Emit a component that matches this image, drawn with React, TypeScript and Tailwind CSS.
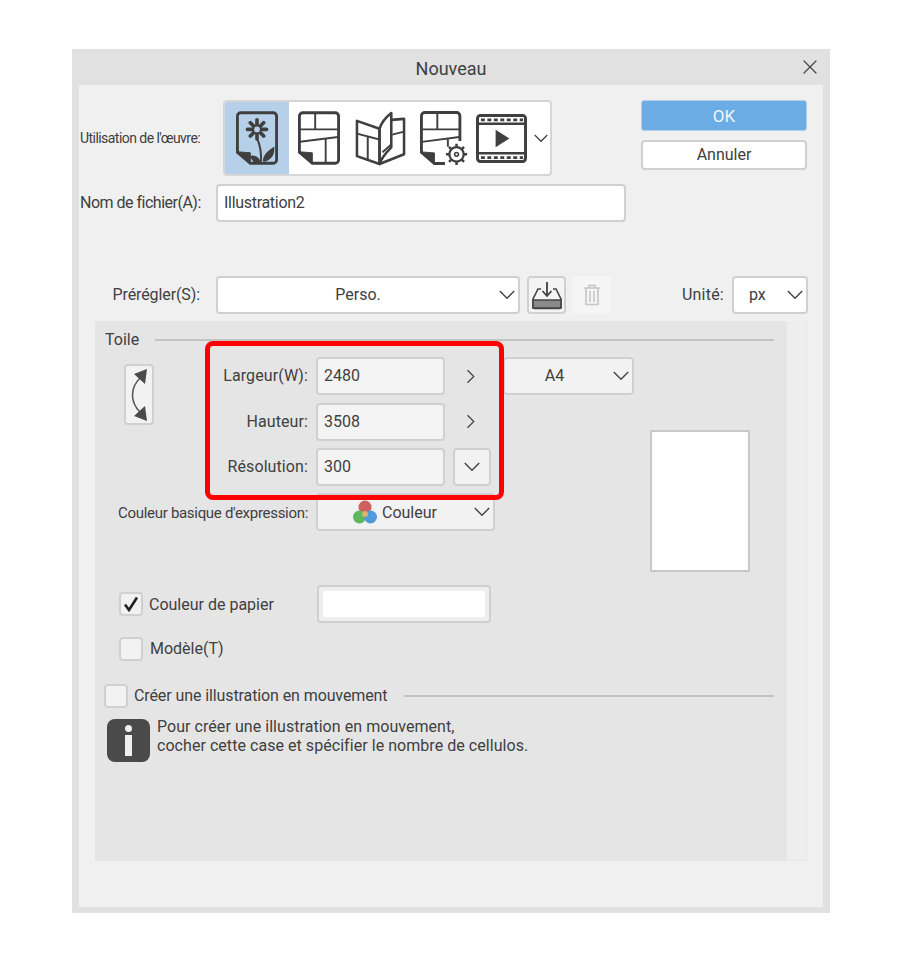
import { X } from 'lucide-react';

const fieldBorder = 'border-2 border-[#d0d0d0] rounded-[4px]';

function Chevron({ w, dir = 'down', className }: { w: number; dir?: 'down' | 'right'; className?: string }) {
  return (
    <svg width={w} height={w / 2 + 2} viewBox="0 0 20 12" fill="none" stroke="#444" strokeWidth="1.800" className={`${dir === 'right' ? 'rotate-[-90deg]' : ''} ${className ?? ''}`}>
      <path d="M1 1L10 10L19 1" />
    </svg>
  );
}

function PageFrame({ children }: { children?: React.ReactNode }) {
  return (
    <svg width="42" height="56" viewBox="0 0 44 56" fill="none" stroke="#3f3f3f" strokeWidth="3">
      <path d="M5 1.500H39a3.500 3.500 0 0 1 3.500 3.500V51a3.500 3.500 0 0 1-3.500 3.500H15L1.500 43V5A3.500 3.500 0 0 1 5 1.500Z" />
      <path d="M2 42.500L15 43.500V54Z" fill="#3f3f3f" strokeWidth="1" />
      {children}
    </svg>
  );
}

function FlowerIcon() {
  return (
    <PageFrame>
      <g stroke="#3f3f3f" strokeWidth="3.800" strokeLinecap="round">
        <path d="M22 9V29M12 19H32M15 12L29 26M29 12L15 26" />
      </g>
      <circle cx="22" cy="19" r="3.800" fill="#b5d0e8" stroke="#3f3f3f" strokeWidth="1.500" />
      <path d="M22 28C25 35 27 43 26 53" strokeWidth="2" />
      <path d="M14 47C20 45 25 48 26 54H19ZM28 52C29 45 34 41 40 37C41 46 37 51 30 53Z" fill="#3f3f3f" stroke="none" />
    </PageFrame>
  );
}

function PanelsLines() {
  return <path strokeWidth="2" d="M18 2V19M2 19H42M2 32L42 27M29 29V54" />;
}

function BookIcon() {
  return (
    <svg width="51" height="55" viewBox="0 0 52 56" fill="none" stroke="#3f3f3f" strokeWidth="2.600" strokeLinejoin="round">
      <path d="M2 10L25 18V54L2 46Z" />
      <path d="M25 18C27 11 32 6 37 2V37C32 42 27 48 25 54Z" />
      <path d="M37 9L50 8V44L25 54" />
      <path d="M2 23L25 29M13 26V50" strokeWidth="2" />
      <path d="M38 24L50 21M28 42L37 34" strokeWidth="2" />
    </svg>
  );
}

function GearPageIcon() {
  return (
    <svg width="50" height="57" viewBox="0 0 52 57" fill="none" stroke="#3f3f3f">
      <path strokeWidth="3" d="M26 54.500H15L1.500 43V5A3.500 3.500 0 0 1 5 1.500H38a3.500 3.500 0 0 1 3.500 3.500V31" />
      <path d="M2 42.500L15 43.500V54Z" fill="#3f3f3f" strokeWidth="1" />
      <path strokeWidth="2" d="M18 2V19M2 19H41M2 32L41 27M29 29V37" />
      <circle cx="38" cy="45" r="7.500" strokeWidth="2.400" />
      <circle cx="38" cy="45" r="2" strokeWidth="1.600" />
      <path strokeWidth="2.600" d="M38 34V38M38 52V56M27 45H31M45 45H49M30.200 37.200L33 40M43 50L45.800 52.800M30.200 52.800L33 50M43 40L45.800 37.200" />
    </svg>
  );
}

function FilmIcon() {
  return (
    <svg width="51" height="49" viewBox="0 0 52 50" fill="none" stroke="#3f3f3f">
      <rect x="1.500" y="1.500" width="49" height="47" rx="3" strokeWidth="3" />
      <path strokeWidth="2.500" d="M2 10H50M2 40H50" />
      <path strokeWidth="3" strokeDasharray="4 2.600" d="M5 6H48M5 44.500H48" />
      <path d="M20 16L34 25L20 34Z" fill="#3f3f3f" stroke="none" />
    </svg>
  );
}

function SaveIcon() {
  return (
    <svg width="32" height="30" viewBox="0 0 32 30" fill="none" stroke="#444" strokeWidth="1.600">
      <path d="M10 9H7L2 19V27a1.500 1.500 0 0 0 1.500 1.500H28.500a1.500 1.500 0 0 0 1.500-1.500V19L25 9H22" />
      <path d="M2 20H30V28H2Z" fill="#8a8a8a" />
      <path d="M16 2V15M11.500 11L16 16L20.500 11" strokeWidth="1.800" />
    </svg>
  );
}

function TrashIcon() {
  return (
    <svg width="18" height="22" viewBox="0 0 18 22" fill="none" stroke="#c6c6c6" strokeWidth="1.600">
      <path d="M1 4H17M6 4V1.500H12V4M3 4V20.500H15V4M7 7V18M11 7V18" />
    </svg>
  );
}

function RotateIcon() {
  return (
    <svg width="24" height="54" viewBox="0 0 24 54" fill="none">
      <path d="M13 10C3 20 3 34 13 44" stroke="#555" strokeWidth="1.500" />
      <path d="M7 6L20 1L18 16ZM7 48L20 53L18 38Z" fill="#4a4a4a" />
    </svg>
  );
}

function ColorIcon() {
  return (
    <svg width="24" height="24" viewBox="0 0 24 24">
      <circle cx="12" cy="7" r="6.500" fill="#d0605f" />
      <circle cx="6.500" cy="17" r="6.500" fill="#5cb85c" />
      <circle cx="17.500" cy="17" r="6.500" fill="#4f9bd9" />
      <circle cx="12" cy="14" r="3" fill="#e0b070" />
    </svg>
  );
}

function InfoIcon() {
  return (
    <svg width="43" height="43" viewBox="0 0 43 43">
      <rect width="43" height="43" rx="8" fill="#4a4a4a" />
      <circle cx="21.500" cy="9.500" r="3.500" fill="#f0f0f0" />
      <rect x="18" y="16" width="7" height="21" fill="#f0f0f0" />
    </svg>
  );
}

function Checkbox({ checked }: { checked?: boolean }) {
  return (
    <div className={`w-6 h-6 shrink-0 flex items-center justify-center bg-[#f2f2f2] ${fieldBorder}`}>
      {checked && (
        <svg width="16" height="16" viewBox="0 0 16 16" fill="none" stroke="#222" strokeWidth="2.600">
          <path d="M2 8.500L6 14L14 1.500" />
        </svg>
      )}
    </div>
  );
}

function SizeField({ label, value, arrow }: { label: string; value: string; arrow: 'right' | 'down' }) {
  return (
    <div className="flex items-center h-[38px]">
      <span className="w-[154px] text-right tracking-[0.1px]">{label}</span>
      <div className={`ml-2 w-[129px] h-full flex items-center pl-[6px] bg-[#f4f4f4] ${fieldBorder}`}>{value}</div>
      {arrow === 'right' ? (
        <div className="w-[46px] ml-[3px] flex justify-center">
          <Chevron w={14} dir="right" />
        </div>
      ) : (
        <div className={`ml-2 w-[38px] h-full flex items-center justify-center bg-[#f2f2f2] ${fieldBorder}`}>
          <Chevron w={16} />
        </div>
      )}
    </div>
  );
}

export default function App() {
  return (
    <div className="w-[900px] h-[954px] bg-white pt-[49px] pl-[72px] text-[16px] leading-5 text-[#404040] font-['Roboto',sans-serif]">
      <div className="w-[758px] h-[864px] bg-[#e1e1e1] px-[7px] pb-[6px] flex flex-col">
        {/* title bar */}
        <div className="relative h-9 shrink-0 flex items-center justify-center pt-1">
          <span className="text-[18px]">Nouveau</span>
          <X size={24} strokeWidth={1.200} color="#444" className="absolute right-px top-[6px]" />
        </div>

        <div className="flex-1 bg-[#f0f0f0] flex flex-col">
          <div className="flex pl-px pt-[15px]">
            <div className="w-[546px]">
              <div className="flex items-center h-[76px]">
                <span className="w-[143px] text-[14px] tracking-[-0.55px]">Utilisation de l'œuvre:</span>
                <div className="flex items-center w-[329px] h-full bg-white border-2 border-[#d6d6d6] rounded-[4px] overflow-hidden">
                  <div className="w-[64px] h-full shrink-0 bg-[#b5d0e8] flex items-center justify-center">
                    <FlowerIcon />
                  </div>
                  <div className="ml-[9px]"><PageFrame><PanelsLines /></PageFrame></div>
                  <div className="ml-[15px]"><BookIcon /></div>
                  <div className="ml-[14px]"><GearPageIcon /></div>
                  <div className="ml-[6px]"><FilmIcon /></div>
                  <Chevron w={14} className="ml-[7px]" />
                </div>
              </div>
              <div className="flex items-center h-[38px] mt-2">
                <span className="w-[136px] tracking-[-0.5px]">Nom de fichier(A):</span>
                <div className={`w-[410px] h-full flex items-center pl-[6px] bg-white tracking-[-0.3px] ${fieldBorder}`}>Illustration2</div>
              </div>
            </div>

            <div className="ml-[15px] w-[166px] flex flex-col gap-[9px]">
              <div className="h-[31px] flex items-center justify-center bg-[#6cace4] border border-[#b5cfe6] rounded-[3px] text-[#f2f7fb] text-[17px]">OK</div>
              <div className={`h-[30px] flex items-center justify-center bg-white ${fieldBorder}`}>Annuler</div>
            </div>
          </div>

          {/* preset row */}
          <div className="flex items-center h-[38px] mt-[54px] pl-px">
            <span className="w-[120px] text-right tracking-[-0.1px]">Prérégler(S):</span>
            <div className={`relative ml-4 w-[304px] h-full flex items-center justify-center pr-5 bg-white ${fieldBorder}`}>
              Perso.
              <Chevron w={16} className="absolute right-[3px] top-[12px]" />
            </div>
            <div className={`ml-[7px] w-[39px] h-full flex items-center justify-center bg-[#f4f4f4] ${fieldBorder}`}>
              <SaveIcon />
            </div>
            <div className="ml-[6px] w-[39px] h-full flex items-center justify-center bg-[#f5f5f5] rounded-[4px]">
              <TrashIcon />
            </div>
            <span className="ml-[71px] w-[43px] tracking-[0.2px]">Unité:</span>
            <div className={`relative ml-[7px] w-[76px] h-full flex items-center pl-[15px] bg-white ${fieldBorder}`}>
              px
              <Chevron w={16} className="absolute right-[3px] top-[12px]" />
            </div>
          </div>

          {/* canvas panel */}
          <div className="relative flex w-[712px] h-[540px] ml-4 mt-[7px]">
            <div className="w-[692px] h-full bg-[#e5e5e5]">
              <div className="flex items-center h-5 mt-[9px] pl-[10px] pr-[13px]">
                <span>Toile</span>
                <div className="flex-1 ml-4 h-0.5 bg-[#c4c4c4]" />
              </div>

              <div className="flex mt-[7px]">
                <div className="w-[555px]">
                  <div className="flex">
                    <div className={`ml-[29px] mt-[7px] w-[30px] h-[61px] flex items-center justify-center bg-[#f2f2f2] ${fieldBorder}`}>
                      <RotateIcon />
                    </div>
                    <div className="flex flex-col gap-[7.500px]">
                      <SizeField label="Largeur(W):" value="2480" arrow="right" />
                      <SizeField label="Hauteur:" value="3508" arrow="right" />
                      <SizeField label="Résolution:" value="300" arrow="down" />
                    </div>
                    <div className={`relative ml-[9px] w-[131px] h-[38px] flex items-center justify-center pr-7 bg-[#f2f2f2] ${fieldBorder}`}>
                      A4
                      <Chevron w={16} className="absolute right-[3px] top-[12px]" />
                    </div>
                  </div>

                  <div className="flex items-center h-[38px] mt-[7px]">
                    <span className="w-[213px] pt-px text-right text-[15px] tracking-[-0.3px]">Couleur basique d'expression:</span>
                    <div className={`relative ml-2 w-[179px] h-full flex items-center pl-[35px] bg-[#f2f2f2] ${fieldBorder}`}>
                      <ColorIcon />
                      <span className="ml-[5px] pt-0.5">Couleur</span>
                      <Chevron w={16} className="absolute right-[3px] top-[12px]" />
                    </div>
                  </div>

                  <div className="flex items-center h-[38px] mt-[54px] pl-6">
                    <Checkbox checked />
                    <span className="ml-[6px] w-[168px] pt-px">Couleur de papier</span>
                    <div className="w-[174px] h-full p-1 bg-[#eeeeee] border-2 border-[#d0d0d0] rounded-[4px]">
                      <div className="w-full h-full bg-white" />
                    </div>
                  </div>

                  <div className="flex items-center h-6 mt-[14px] pl-6">
                    <Checkbox />
                    <span className="ml-[7px]">Modèle(T)</span>
                  </div>
                </div>

                <div className="mt-[73px] w-[100px] h-[142px] bg-white border-2 border-[#c8c8c8]" />
              </div>

              <div className="flex items-center h-6 mt-[23px] pl-[9px] pr-[13px]">
                <Checkbox />
                <span className="ml-[6px] tracking-[-0.1px]">Créer une illustration en mouvement</span>
                <div className="flex-1 ml-4 h-0.5 bg-[#c4c4c4]" />
              </div>

              <div className="flex mt-[11px] pl-3">
                <InfoIcon />
                <p className="ml-[7px] -mt-[2px] leading-[19px] tracking-[0.05px]">
                  Pour créer une illustration en mouvement,
                  <br />
                  cocher cette case et spécifier le nombre de cellulos.
                </p>
              </div>
            </div>
            <div className="w-5 h-full bg-[#eeeeee] border-r border-b border-[#e6e6e6]" />

            {/* red annotation */}
            <div className="absolute left-[110px] top-[20px] w-[299px] h-[159px] border-[5px] border-[#fe0000] rounded-[8px]" />
          </div>
        </div>
      </div>
    </div>
  );
}
